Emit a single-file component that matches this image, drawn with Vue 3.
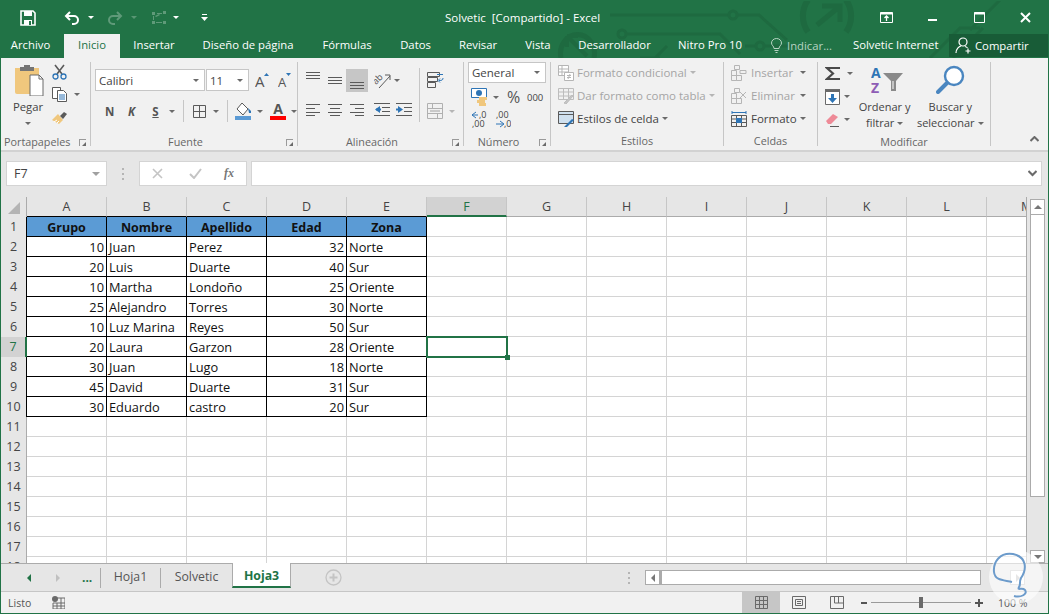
<script setup>
import { computed } from 'vue'
const tabs = [
  { t: 'Archivo', w: 63, first: true }, { t: 'Inicio', w: 56, on: true }, { t: 'Insertar', w: 68 },
  { t: 'Diseño de página', w: 120 }, { t: 'Fórmulas', w: 78 }, { t: 'Datos', w: 59 },
  { t: 'Revisar', w: 66 }, { t: 'Vista', w: 54 }, { t: 'Desarrollador', w: 99 }, { t: 'Nitro Pro 10', w: 92 }
]
const letters = 'ABCDEFGHIJKLM'.split('')
const data = [
  ['Grupo', 'Nombre', 'Apellido', 'Edad', 'Zona'],
  [10, 'Juan', 'Perez', 32, 'Norte'],
  [20, 'Luis', 'Duarte', 40, 'Sur'],
  [10, 'Martha', 'Londoño', 25, 'Oriente'],
  [25, 'Alejandro', 'Torres', 30, 'Norte'],
  [10, 'Luz Marina', 'Reyes', 50, 'Sur'],
  [20, 'Laura', 'Garzon', 28, 'Oriente'],
  [30, 'Juan', 'Lugo', 18, 'Norte'],
  [45, 'David', 'Duarte', 31, 'Sur'],
  [30, 'Eduardo', 'castro', 20, 'Sur']
]
const rows = computed(() => Array.from({ length: 18 }, (_, r) => ({
  n: r + 1,
  cells: letters.map((_, c) => {
    const inTable = r < 10 && c < 5
    const v = inTable ? data[r][c] : ''
    return {
      v,
      cls: {
        black: inTable,
        head: inTable && r === 0,
        num: typeof v === 'number',
        sel: r === 6 && c === 5
      }
    }
  })
})))
</script>

<template>
  <div class="window">
    <svg class="pattern" width="1049" height="58" viewBox="0 0 1049 58" fill="none" stroke="#1e6a40" stroke-width="3">
      <path d="M561 58A17 19 0 1 1 594 58" stroke-width="5" />
      <path d="M567 36h11M567 36v11M567 36l20 20" stroke-width="4" />
      <path d="M610 15h119M737 15h22l28 25" />
      <circle cx="733" cy="15" r="4" />
      <circle cx="622" cy="34" r="4" />
      <path d="M626 34h94l20 20M655 58l12-12M640 58h20" />
      <path d="M745 46h11M764 46h34" />
      <circle cx="760" cy="46" r="4" />
      <path d="M808 0a24 26 0 0 0 0 32M846 0a24 26 0 0 1 0 32" stroke-width="6" />
      <path d="M817 25l22-18M822 6h18v16" stroke-width="5" />
      <path d="M930 58l30-30h20M953 58l30-30M1000 0l-30 30" />
    </svg>

    <header class="titlebar">
      <div class="qat">
        <svg class="q-save" width="16" height="16" viewBox="0 0 16 16"><path d="M1 1h12l2 2v12H1z" fill="none" stroke="#fff" stroke-width="1.6"/><path d="M4 1h8v5H4zM4 10h8v5H4z" fill="#fff"/><path d="M9 11h2v4H9z" fill="#217346"/></svg>
        <svg class="q-undo" width="16" height="14" viewBox="0 0 16 14" fill="none" stroke="#fff" stroke-width="2"><path d="M6 1L2 5l4 4M2 5h8a3.500 3.500 0 0 1 0 8H8"/></svg>
        <i class="caret white q-c1"></i>
        <svg class="q-redo" width="16" height="14" viewBox="0 0 16 14" fill="none" stroke="#5f9a79" stroke-width="2"><path d="M10 1l4 4-4 4M14 5H6a3.500 3.500 0 0 0 0 8h2"/></svg>
        <i class="caret dimgreen q-c2"></i>
        <svg class="q-touch" width="17" height="14" viewBox="0 0 17 14" fill="#5f9a79"><path d="M1 1h3v3H1zM12 0h3v3h-3zM1 10h3v3H1zM12 10h3v3h-3zM6 2h5v1H6zM4 5l4-2 1 1-4 2zM5 11h6v1H5zM2 5h1v4H2z"/></svg>
        <i class="caret white q-c3"></i>
        <svg class="q-more" width="7" height="8" viewBox="0 0 7 8" fill="#fff"><path d="M1 0h5v1H1zM0 3h7L3.500 7z"/></svg>
      </div>
      <div class="doc-title">Solvetic&nbsp; [Compartido] - Excel</div>
      <div class="winbtns">
        <svg width="13" height="11" viewBox="0 0 13 11" fill="none" stroke="#fff"><path d="M.5 .5h12v10H.5z"/><path d="M.5 1.500h12" stroke-width="2"/><path d="M6.500 9V4M4.500 6l2-2 2 2" stroke-width="1.300"/></svg>
        <span class="wmin"></span>
        <svg width="11" height="11" viewBox="0 0 11 11" fill="none" stroke="#fff"><path d="M.5 .5h10v10H.5z"/><path d="M0 1.500h11" stroke-width="2"/></svg>
        <svg width="11" height="11" viewBox="0 0 11 11" fill="none" stroke="#fff" stroke-width="2"><path d="M1 1l9 9M10 1l-9 9"/></svg>
      </div>
    </header>

    <nav class="tabs">
      <div v-for="t in tabs" :key="t.t" class="tab" :class="{ on: t.on, first: t.first }" :style="{ width: t.w + 'px' }">{{ t.t }}</div>
      <div class="tell">
        <svg width="11" height="15" viewBox="0 0 11 15" fill="none" stroke="#b7d3c3"><path d="M3 10.500C3 8 .5 7.500 .5 5a5 4.500 0 0 1 10 0C10.500 7.500 8 8 8 10.500zM3.500 12.500h4M4.500 14.500h2"/></svg>
        <span>Indicar...</span>
      </div>
      <div class="account">Solvetic Internet</div>
      <div class="share">
        <svg width="17" height="17" viewBox="0 0 17 17" fill="none" stroke="#fff" stroke-width="1.200"><circle cx="8" cy="5" r="4"/><path d="M1 16c0-4 3-6.500 5-7M10 9.500c1 .3 2 .8 2.500 1.500M13 11.500v5M10.500 14h5"/></svg>
        <span>Compartir</span>
      </div>
    </nav>

    <section class="ribbon">
      <!-- Portapapeles -->
      <div class="group" style="width:90px">
        <div class="body clip">
          <div class="paste">
            <svg width="29" height="31" viewBox="0 0 29 31"><path d="M0 3h24v26H2a2 2 0 0 1-2-2z" fill="#f0c77d"/><path d="M5 2h14v4H5z" fill="#757575"/><path d="M9 0h6v3H9z" fill="#757575"/><path d="M15 10h9l4 4v17H15z" fill="#fff" stroke="#6a6a6a"/><path d="M24 10v4h4" fill="none" stroke="#6a6a6a"/></svg>
            <span class="pegar">Pegar</span>
            <i class="caret"></i>
          </div>
          <div class="rows clip-rows">
            <svg width="15" height="16" viewBox="0 0 15 16" fill="none"><path d="M3 1l7 9M12 1L5 10" stroke="#5a5a5a" stroke-width="1.600"/><circle cx="3.500" cy="12.500" r="2.500" stroke="#2e75b6" stroke-width="1.300"/><circle cx="11.500" cy="12.500" r="2.500" stroke="#2e75b6" stroke-width="1.300"/></svg>
            <div class="ir"><svg width="16" height="15" viewBox="0 0 16 15" fill="#fff" stroke="#5a5a5a"><path d="M.5 .5h8v11h-8z"/><path d="M5.500 3.500h6l3 3v8h-9z"/><path d="M7 8h6M7 10h6M7 12h6" stroke="#2e75b6"/></svg><i class="caret" style="margin-left:6px"></i></div>
            <svg width="16" height="15" viewBox="0 0 16 15"><path d="M0 10l6-6 5 6-4 4z" fill="#f0c77d"/><path d="M2 12l3-2M5 13l2-2" stroke="#fff"/><path d="M8 6l4-4 3 2-4 5z" fill="#5a5a5a"/></svg>
          </div>
        </div>
        <div class="label">Portapapeles<i class="launch"></i></div>
      </div>

      <!-- Fuente -->
      <div class="group" style="width:207px">
        <div class="body font-body">
          <div class="frow top">
            <div class="combo" style="width:110px"><span>Calibri</span><i class="caret"></i></div>
            <div class="combo" style="width:43px;margin-left:1px"><span>11</span><i class="caret"></i></div>
            <svg style="margin-left:6px" width="14" height="15" viewBox="0 0 14 15"><text class="aicon" x="0" y="14">A</text><path d="M9 3l2.500-3L14 3z" fill="#2e75b6"/></svg>
            <svg style="margin-left:9px" width="13" height="15" viewBox="0 0 13 15"><text class="aicon small" x="0" y="14">A</text><path d="M8 0h5l-2.500 3z" fill="#2e75b6"/></svg>
          </div>
          <div class="frow bot">
            <b class="fmt" style="margin-left:10px">N</b>
            <b class="fmt it" style="margin-left:13px">K</b>
            <b class="fmt un" style="margin-left:15px">S</b>
            <i class="caret" style="margin-left:9px"></i>
            <i class="vsep" style="margin-left:8px"></i>
            <svg style="margin-left:9px" width="13" height="13" viewBox="0 0 13 13" fill="none" stroke="#5a5a5a"><path d="M.5 .5h12v12H.5zM6.500 0v13M0 6.500h13"/></svg>
            <i class="caret" style="margin-left:7px"></i>
            <i class="vsep" style="margin-left:8px"></i>
            <svg style="margin-left:7px" width="17" height="18" viewBox="0 0 17 18"><path d="M7 1l6 6-5 6-6-6z" fill="#fff" stroke="#5a5a5a"/><path d="M13 6l3 3v2h-2z" fill="#2e75b6"/><path d="M0 14h16v4H0z" fill="#5b9bd5"/></svg>
            <i class="caret" style="margin-left:5px"></i>
            <div class="acolor" style="margin-left:7px"><span>A</span><i></i></div>
            <i class="caret" style="margin-left:5px"></i>
          </div>
        </div>
        <div class="label pad">Fuente<i class="launch"></i></div>
      </div>

      <!-- Alineación -->
      <div class="group" style="width:166px">
        <div class="body align-body">
          <div class="agrid">
            <div class="acell"><svg class="up" width="14" height="8" viewBox="0 0 14 8"><path d="M0 .5h14M0 3.500h14M0 6.500h14" stroke="#5a5a5a"/></svg></div>
            <div class="acell"><svg width="14" height="8" viewBox="0 0 14 8"><path d="M0 .5h14M0 3.500h14M0 6.500h14" stroke="#5a5a5a"/></svg></div>
            <div class="acell picked"><svg width="14" height="7" viewBox="0 0 14 7"><path d="M0 .5h14M0 3.500h14M0 6.500h14" stroke="#5a5a5a"/></svg></div>
            <div class="acell">
              <svg width="17" height="18" viewBox="0 0 17 18" fill="none"><text class="ab" transform="translate(2 13) rotate(-45)">ab</text><path d="M5 16L16 4M11 3h5v5" stroke="#5a5a5a"/></svg>
              <i class="caret" style="margin-left:3px"></i>
            </div>
            <div class="acell"><svg width="14" height="12" viewBox="0 0 14 12"><path d="M0 .5h14M0 4.500h9M0 8.500h14M0 11.500h9" stroke="#5a5a5a"/></svg></div>
            <div class="acell"><svg width="14" height="12" viewBox="0 0 14 12"><path d="M0 .5h14M2 4.500h10M0 8.500h14M2 11.500h10" stroke="#5a5a5a"/></svg></div>
            <div class="acell inset"><svg width="14" height="12" viewBox="0 0 14 12"><path d="M0 .5h14M5 4.500h9M0 8.500h14M5 11.500h9" stroke="#5a5a5a"/></svg></div>
            <div class="acell">
              <svg width="16" height="13" viewBox="0 0 16 13"><path d="M0 .5h16M8 4.500h8M8 8.500h8M0 12.500h16" stroke="#5a5a5a"/><path d="M6 3v7L1 6.500z" fill="#2e75b6"/><path d="M2 5.500h5v2H2z" fill="#2e75b6"/></svg>
              <svg style="margin-left:6px" width="16" height="13" viewBox="0 0 16 13"><path d="M0 .5h16M8 4.500h8M8 8.500h8M0 12.500h16" stroke="#5a5a5a"/><path d="M2 3v7l5-3.500z" fill="#2e75b6"/><path d="M0 5.500h4v2H0z" fill="#2e75b6"/></svg>
            </div>
          </div>
          <i class="vsep long"></i>
          <div class="acol">
            <svg width="17" height="16" viewBox="0 0 17 16" fill="none" stroke="#5a5a5a"><path d="M.5 .5h12v4H.5zM.5 5.500h10v4H.5zM.5 10.500h8v5H.5z"/><path d="M10 2.500h6M16 6c0 2-1 2.500-4 2.500" stroke="#2e75b6"/><path d="M13 6.500l-2 2 2 2" stroke="#2e75b6"/></svg>
            <div class="ir merge"><svg width="16" height="16" viewBox="0 0 16 16" fill="none" stroke="#b0b0b0"><path d="M.5 .5h15v15H.5zM0 5.500h16M0 10.500h16M5.500 0v5M10.500 11v5"/><path d="M3 8h10" stroke="#a0a0a0"/></svg><i class="caret dim" style="margin-left:6px"></i></div>
          </div>
        </div>
        <div class="label pad">Alineación<i class="launch"></i></div>
      </div>

      <!-- Número -->
      <div class="group" style="width:87px">
        <div class="body num-body">
          <div class="combo general"><span>General</span><i class="caret"></i></div>
          <div class="nrow r2">
            <svg width="17" height="18" viewBox="0 0 17 18"><path d="M.5 .5h15v9H.5z" fill="#fff" stroke="#2e75b6"/><circle cx="8" cy="5" r="3" fill="#2e75b6"/><path d="M8 9h8v3H8zM6 12h8v3H6zM8 15h7v3H8z" fill="#f0c77d"/></svg>
            <i class="caret" style="margin-left:5px"></i>
            <span class="pct">%</span>
            <span class="mil">000</span>
          </div>
          <div class="nrow r3">
            <svg width="16" height="17" viewBox="0 0 16 17"><path d="M5 1L1 4l4 3M1 4h6" stroke="#2e75b6" fill="none"/><text class="deci" x="8" y="7">,0</text><text class="deci" x="1" y="16">,00</text></svg>
            <svg style="margin-left:8px" width="16" height="17" viewBox="0 0 16 17"><text class="deci" x="1" y="7">,00</text><path d="M1 13h7M5 10l4 3-4 3" stroke="#2e75b6" fill="none"/><text class="deci" x="9" y="16">,0</text></svg>
          </div>
        </div>
        <div class="label pad">Número<i class="launch"></i></div>
      </div>

      <!-- Estilos -->
      <div class="group" style="width:173px">
        <div class="body rows styl">
          <div class="ir off">
            <svg width="16" height="16" viewBox="0 0 16 16" fill="#fff" stroke="#b5b5b5"><path d="M.5 .5h10v10H.5zM0 4h11M0 7h11M4 0v11"/><path d="M6.500 7.500h9v8h-9z"/><path d="M9 10.500h4M9 12.500h4M12 9l-2 5"/></svg>
            <span>Formato condicional</span><i class="caret dim"></i>
          </div>
          <div class="ir off">
            <svg width="16" height="16" viewBox="0 0 16 16" fill="none" stroke="#bdbdbd"><path d="M.5 .5h15v11H.5zM0 4h16M0 8h16M5.500 0v12M10.500 0v12"/><path d="M6 15l8-8 1 1-7 8z" fill="#c5c5c5"/></svg>
            <span>Dar formato como tabla</span><i class="caret dim"></i>
          </div>
          <div class="ir">
            <svg width="16" height="16" viewBox="0 0 16 16"><path d="M.5 .5h15v12H.5z" fill="#cfe0ef" stroke="#5a5a5a"/><path d="M0 3.500h16" stroke="#5a5a5a"/><path d="M6 16l8-8 2 1-7 7z" fill="#2e75b6"/></svg>
            <span class="dark">Estilos de celda</span><i class="caret"></i>
          </div>
        </div>
        <div class="label">Estilos</div>
      </div>

      <!-- Celdas -->
      <div class="group" style="width:94px">
        <div class="body rows cel">
          <div class="ir off">
            <svg width="16" height="16" viewBox="0 0 16 16" fill="#f1f1f1" stroke="#b5b5b5"><path d="M3.500 .5h5v4h-5zM.5 10.500h5v5h-5zM5.500 10.500h5v5h-5zM.5 5.500h5v5h-5z"/><path d="M9 5.500h6v3H9z"/></svg>
            <span>Insertar</span><i class="caret" style="margin-left:auto"></i>
          </div>
          <div class="ir off">
            <svg width="16" height="16" viewBox="0 0 16 16" fill="#f1f1f1" stroke="#b5b5b5"><path d="M3.500 .5h5v4h-5zM.5 10.500h5v5h-5zM5.500 10.500h5v5h-5zM.5 5.500h5v5h-5z"/><path d="M9 4l6 6M15 4l-6 6"/></svg>
            <span>Eliminar</span><i class="caret" style="margin-left:auto"></i>
          </div>
          <div class="ir">
            <svg width="16" height="17" viewBox="0 0 16 17" fill="none"><path d="M.5 5.500h15v11H.5z" stroke="#5a5a5a"/><path d="M0 9h16M0 12.500h16M5.500 5v12M10.500 5v12" stroke="#5a5a5a"/><path d="M5 8h6v5H5z" fill="#2e75b6"/><path d="M1 1v3M15 1v3M1 2.500h14" stroke="#2e75b6"/></svg>
            <span class="dark">Formato</span><i class="caret" style="margin-left:3px"></i>
          </div>
        </div>
        <div class="label">Celdas</div>
      </div>

      <!-- Modificar -->
      <div class="group" style="width:173px">
        <div class="body mod">
          <div class="rows mrows">
            <div class="ir">
              <svg width="16" height="15" viewBox="0 0 16 15" fill="none" stroke="#4a4a4a" stroke-width="2.200"><path d="M15 2H2l6 5.500L2 13h13"/></svg>
              <i class="caret" style="margin-left:6px"></i>
            </div>
            <div class="ir">
              <svg width="15" height="16" viewBox="0 0 15 16"><path d="M.5 .5h14v15H.5z" fill="#fff" stroke="#6a6a6a"/><path d="M0 0h15v3H0z" fill="#6a6a6a"/><path d="M6 5h3v4h3l-4.500 5L3 9h3z" fill="#2e75b6"/></svg>
              <i class="caret" style="margin-left:4px"></i>
            </div>
            <div class="ir">
              <svg width="15" height="14" viewBox="0 0 15 14"><path d="M1 8l7-7 5 3-7 7H3z" fill="#ee8a97"/><path d="M5 13.500h9" stroke="#5a5a5a"/></svg>
              <i class="caret" style="margin-left:4px"></i>
            </div>
          </div>
          <div class="big sort">
            <svg width="33" height="28" viewBox="0 0 33 28"><text class="az a" x="0" y="12">A</text><text class="az z" x="0" y="27">Z</text><path d="M12 7h20l-7 8v10h-5V15z" fill="#8a8a8a"/><path d="M22 15v8" stroke="#fff"/></svg>
            <span>Ordenar y</span>
            <span>filtrar<i class="caret" style="margin-left:3px"></i></span>
          </div>
          <div class="big find">
            <svg width="29" height="29" viewBox="0 0 29 29" fill="none"><circle cx="18" cy="11" r="9" fill="#fff" stroke="#4a86c0" stroke-width="2.400"/><path d="M11 18L2 27" stroke="#4a86c0" stroke-width="4" stroke-linecap="round"/></svg>
            <span>Buscar y</span>
            <span>seleccionar<i class="caret" style="margin-left:3px"></i></span>
          </div>
        </div>
        <div class="label">Modificar</div>
      </div>

      <div class="collapse">
        <svg width="9" height="6" viewBox="0 0 9 6" fill="none" stroke="#6a6a6a" stroke-width="2"><path d="M.5 5l4-4 4 4"/></svg>
      </div>
    </section>

    <section class="formula">
      <div class="namebox"><span>F7</span><i class="caret big-c"></i></div>
      <div class="grip"><i></i><i></i><i></i></div>
      <div class="fxbox">
        <svg width="11" height="11" viewBox="0 0 11 11" stroke="#c4c4c4" stroke-width="1.600"><path d="M1 1l9 9M10 1l-9 9"/></svg>
        <svg width="13" height="11" viewBox="0 0 13 11" fill="none" stroke="#c4c4c4" stroke-width="2"><path d="M1 6l4 4 7-9"/></svg>
        <em>fx</em>
      </div>
      <div class="input">
        <svg width="9" height="7" viewBox="0 0 9 7" fill="none" stroke="#6a6a6a" stroke-width="2"><path d="M.5 1l4 4 4-4"/></svg>
      </div>
    </section>

    <section class="sheet-area">
      <div class="sheet">
        <div class="colhead">
          <div class="corner"><svg width="12" height="12" viewBox="0 0 12 12"><path d="M12 0v12H0z" fill="#b4b4b4"/></svg></div>
          <div v-for="l in letters" :key="l" class="ch" :class="{ csel: l === 'F' }">{{ l }}</div>
        </div>
        <div v-for="r in rows" :key="r.n" class="row">
          <div class="rh" :class="{ rsel: r.n === 7, rblack: r.n <= 10 }">{{ r.n }}</div>
          <div v-for="(c, i) in r.cells" :key="i" class="cell" :class="c.cls">{{ c.v }}<i v-if="c.cls.sel" class="handle"></i></div>
        </div>
      </div>
      <aside class="vscroll">
        <div class="sb-btn"><i class="tri-up"></i></div>
        <div class="sb-thumb"></div>
        <div class="sb-space"></div>
        <div class="sb-btn down"><i class="tri-down"></i></div>
      </aside>
    </section>

    <section class="sheetbar">
      <i class="tri-l green"></i>
      <i class="tri-r"></i>
      <span class="more">...</span>
      <div class="stab first">Hoja1</div>
      <div class="stab second">Solvetic</div>
      <div class="stab active">Hoja3</div>
      <svg class="plus" width="17" height="17" viewBox="0 0 17 17" fill="none" stroke="#c4c4c4"><circle cx="8.500" cy="8.500" r="7.500" stroke-width="1.300"/><path d="M4.500 8.500h8M8.500 4.500v8" stroke-width="2"/></svg>
      <div class="grip2"><i></i><i></i><i></i></div>
      <div class="hscroll">
        <div class="hb"><i class="tri-l dark"></i></div>
        <div class="hthumb"></div>
        <div class="hspace"></div>
        <div class="hb right"><i class="tri-r"></i></div>
      </div>
    </section>

    <footer class="status">
      <span class="listo">Listo</span>
      <svg class="macro" width="13" height="13" viewBox="0 0 13 13"><circle cx="3" cy="3" r="3" fill="#6a6a6a"/><path d="M5 2h8v11H1V7h12M1 10h12M5 7v6M9 2v11" fill="none" stroke="#6a6a6a"/></svg>
      <div class="views">
        <div class="view vsel"><svg width="13" height="13" viewBox="0 0 13 13" fill="none" stroke="#6a6a6a"><path d="M.5 .5h12v12H.5zM4.500 0v13M8.500 0v13M0 4.500h13M0 8.500h13"/></svg></div>
        <div class="view"><svg width="14" height="13" viewBox="0 0 14 13" fill="none" stroke="#6a6a6a"><path d="M.5 .5h13v12H.5zM3.500 3.500h7v6h-7zM5 5.500h4M5 7.500h4"/></svg></div>
        <div class="view"><svg width="14" height="13" viewBox="0 0 14 13" fill="none" stroke="#6a6a6a"><path d="M.5 .5h13v12H.5zM4.500 0v7h9M8.500 0v7"/></svg></div>
      </div>
      <div class="zoom">
        <i class="zminus"></i>
        <div class="ztrack"><i></i></div>
        <i class="zplus"></i>
        <span>100 %</span>
      </div>
    </footer>

    <svg class="logo" width="56" height="56" viewBox="0 0 56 56" fill="none">
      <circle cx="28" cy="28" r="27" fill="#fff" fill-opacity=".6"/>
      <path d="M26 47c7 2 14-2 11-6-3-3-8 1-6-3 2-3 0-5 2-9 6-9 6-21-8-24C12 3 5 13 6 23c1 9 10 8 18 10" stroke="#6c9bcb" stroke-width="2"/>
    </svg>
  </div>
</template>

<style>
html, body { margin: 0; padding: 0; overflow: hidden; }
</style>

<style scoped>
* { box-sizing: border-box; }
.window {
  position: relative; width: 1049px; height: 614px; overflow: hidden;
  border: 1px solid #217346; background: #e6e6e6;
  font-family: "Open Sans", "Noto Sans", sans-serif; font-size: 11px; color: #444;
  display: flex; flex-direction: column;
}
i { display: block; font-style: normal; }
svg { display: block; flex: none; }
.caret { width: 0; height: 0; border: 3px solid transparent; border-top: 3px solid #6a6a6a; border-bottom: 0; flex: none; }
.caret.white { border-top-color: #fff; }
.caret.dimgreen { border-top-color: #5f9a79; }
.caret.dim { border-top-color: #b5b5b5; }

.window::before { content: ""; position: absolute; inset: 0 0 auto 0; height: 57px; background: #217346; }
.pattern { position: absolute; left: -1px; top: -1px; z-index: 1; }
.titlebar, .tabs, .ribbon, .formula, .sheet-area, .sheetbar, .status { position: relative; z-index: 2; }
.titlebar { height: 33px; display: flex; align-items: center; color: #fff; flex: none; }
.qat { display: flex; align-items: center; width: 430px; padding-left: 19px; }
.q-undo { margin-left: 28px; }
.q-c1 { margin-left: 8px; }
.q-redo { margin-left: 13px; }
.q-c2 { margin-left: 8px; opacity: .9; }
.q-touch { margin-left: 14px; }
.q-c3 { margin-left: 5px; }
.q-more { margin-left: 22px; }
.doc-title { width: 300px; font-size: 11.5px; padding-left: 14px; white-space: nowrap; }
.winbtns { display: flex; align-items: center; margin-left: auto; width: 168px; }
.winbtns svg:nth-child(3) { margin-left: 37px; }
.winbtns svg:nth-child(4) { margin-left: 35px; }
.wmin { width: 9px; height: 2px; background: #fff; margin-left: 35px; margin-top: 4px; }

.tabs { height: 24px; display: flex; color: #fff; font-size: 11.3px; flex: none; }
.tab { text-align: center; line-height: 22px; flex: none; white-space: nowrap; }
.tab.first { padding-right: 4px; }
.tab.on { background: #f1f1f1; color: #217346; }
.tell { display: flex; align-items: center; gap: 5px; margin-left: 15px; color: #b7d3c3; width: 82px; height: 22px; }
.account { white-space: nowrap; width: 95px; line-height: 22px; }
.share { margin-left: auto; width: 99px; height: 23px; background: #185c37; display: flex; align-items: center; gap: 3px; padding-left: 6px; }

.ribbon { height: 94px; background: #f1f1f1; border-bottom: 2px solid #d2d2d2; display: flex; padding-top: 4px; flex: none; }
.group { height: 84px; border-right: 1px solid #c6c6c6; display: flex; flex-direction: column; flex: none; }
.body { height: 72px; flex: none; }
.label { height: 12px; line-height: 16px; position: relative; text-align: center; font-size: 10.8px; color: #666; white-space: nowrap; }
.label.pad { padding-right: 17px; }
.launch { position: absolute; right: 4px; top: 5px; width: 7px; height: 7px; border-left: 1px solid #9a9a9a; border-top: 1px solid #9a9a9a; }
.launch::after { content: ""; position: absolute; right: 0; bottom: 0; width: 0; height: 0; border: 2px solid #6a6a6a; border-left-color: transparent; border-top-color: transparent; }
.group:first-child .label { text-align: left; padding-left: 3px; }
.rows { display: grid; grid-template-rows: repeat(3, 23px); align-items: center; }
.ir { display: flex; align-items: center; white-space: nowrap; }
.off { color: #a5a5a5; }
.dark { color: #444; }

.clip { display: flex; }
.paste { width: 54px; padding-top: 3px; display: flex; flex-direction: column; align-items: center; }
.paste svg { margin-left: 2px; }
.pegar { margin-top: 3px; font-size: 11.3px; line-height: 16px; }
.paste .caret { margin-top: 7px; }
.clip-rows { margin-top: -2px; margin-left: -3px; }

.font-body { padding-left: 4px; }
.frow { display: flex; align-items: center; }
.top { margin-top: 7px; height: 22px; }
.bot { margin-top: 9px; height: 22px; }
.combo { height: 22px; background: #fff; border: 1px solid #c6c6c6; display: flex; align-items: center; justify-content: space-between; padding: 0 5px 0 3px; font-size: 11.5px; color: #444; }
.aicon { font: 15px "Open Sans", sans-serif; fill: #555; }
.aicon.small { font-size: 13px; }
.fmt { font: 700 11.5px "Open Sans", sans-serif; color: #555; width: 9px; text-align: center; }
.fmt.it { font-style: italic; }
.fmt.un { text-decoration: underline; }
.vsep { width: 1px; height: 22px; background: #c6c6c6; flex: none; }
.vsep.long { height: 54px; margin-top: 6px; }
.acolor { width: 16px; display: flex; flex-direction: column; align-items: center; }
.acolor span { font: 700 14px/13px "Open Sans", sans-serif; color: #555; }
.acolor i { width: 16px; height: 4px; background: #f00; margin-top: 1px; }

.align-body { display: flex; }
.agrid { display: grid; grid-template-columns: 22px 18px 28px 45px; grid-template-rows: 23px 29px; margin-top: 7px; width: 121px; padding-left: 8px; align-content: start; }
.acell { display: flex; justify-content: flex-start; align-items: center; height: 23px; }
.up { margin-top: -10px; }
.picked { background: #c6c6c6; width: 22px; align-items: flex-end; justify-content: center; padding-bottom: 3px; }
.inset { padding-left: 4px; }
.acell:nth-child(n+5) { margin-top: 6px; }
.ab { font: 9px "Open Sans", sans-serif; fill: #555; }
.acol { padding-left: 7px; padding-top: 10px; }
.merge { margin-top: 15px; }

.num-body { padding: 0 4px; }
.general { width: 78px; height: 21px; }
.nrow { display: flex; align-items: center; padding-left: 3px; }
.r2 { margin-top: 5px; height: 18px; }
.r3 { margin-top: 4px; height: 18px; }
.pct { font-size: 16px; margin-left: 8px; width: 15px; color: #555; line-height: 18px; }
.mil { font-size: 9.5px; margin-left: 5px; color: #444; }
.deci { font: 9px "Open Sans", sans-serif; fill: #444; }

.styl { padding-left: 7px; font-size: 11.5px; margin-top: -1px; }
.styl span { margin: 0 3px 0 3px; }
.cel { padding: 0 14px 0 7px; font-size: 11.5px; margin-top: -1px; }
.cel span { margin-left: 4px; }

.mod { display: flex; font-size: 11px; }
.mrows { width: 41px; padding-left: 7px; }
.big { display: flex; flex-direction: column; align-items: center; white-space: nowrap; line-height: 16px; padding-top: 4px; }
.big svg { margin-bottom: 5px; }
.big span { display: flex; align-items: center; }
.sort { width: 52px; }
.sort svg { margin-left: 6px; }
.find { width: 80px; padding-top: 3px; }
.az { font: 700 14px "Open Sans", sans-serif; }
.az.a { fill: #2e75b6; }
.az.z { fill: #8e5db5; }
.collapse { margin-left: auto; margin-top: 74px; padding-right: 9px; }

.formula { height: 45px; display: flex; padding: 9px 6px 11px 5px; flex: none; }
.namebox { width: 101px; background: #fff; border: 1px solid #d4d4d4; display: flex; align-items: center; justify-content: space-between; padding: 0 6px 0 7px; font-size: 12.5px; }
.big-c { border-width: 4px; border-top-width: 4px; border-top-color: #a0a0a0; }
.grip { width: 32px; display: flex; flex-direction: column; align-items: center; justify-content: center; gap: 3px; }
.grip i { width: 2px; height: 2px; background: #b5b5b5; }
.fxbox { width: 108px; background: #fff; border: 1px solid #d4d4d4; display: flex; align-items: center; padding-left: 12px; }
.fxbox svg:nth-child(2) { margin-left: 26px; }
.fxbox em { margin-left: 22px; font: italic 700 12px "Liberation Serif", serif; color: #777; }
.input { flex: 1; margin-left: 4px; background: #fff; border: 1px solid #d4d4d4; display: flex; align-items: center; justify-content: flex-end; padding-right: 4px; }

.sheet-area { height: 366px; display: flex; flex: none; }
.sheet { width: 1026px; height: 366px; overflow: hidden; border-right: 1px solid #ababab; font-size: 12.8px; color: #111; flex: none; background: #e6e6e6; }
.colhead { display: flex; height: 20px; }
.corner { width: 26px; flex: none; display: flex; justify-content: center; align-items: center; padding: 2px 0 0 0; border-right: 1px solid #ababab; }
.ch { width: 80px; flex: none; text-align: center; line-height: 20px; color: #444; font-size: 12.5px; border-right: 1px solid #c6c6c6; border-bottom: 1px solid #ababab; }
.ch:nth-child(-n+6) { border-bottom-color: #000; }
.csel { background: #d2d2d2; color: #217346; border-bottom: 2px solid #217346 !important; }
.row { display: flex; height: 20px; }
.rh { width: 26px; flex: none; text-align: center; line-height: 20px; color: #444; font-size: 12.5px; border-right: 1px solid #ababab; }
.rblack { border-right-color: #000; }
.rsel { background: #d2d2d2; color: #217346; border-right: 2px solid #217346; }
.cell { width: 80px; height: 20px; flex: none; background: #fff; border-right: 1px solid #d4d4d4; border-bottom: 1px solid #d4d4d4; padding: 0 2px; line-height: 21px; white-space: nowrap; position: relative; }
.cell.black { border-color: #000; }
.cell.head { background: #5b9bd5; font-weight: 700; font-size: 12.5px; text-align: center; }
.cell.num { text-align: right; }
.cell.sel { box-shadow: inset 0 0 0 2px #217346; overflow: visible; z-index: 2; margin: -1px -1px 0 -1px; width: 82px; height: 22px; border: 0; }
.handle { position: absolute; right: -2px; bottom: -2px; width: 5px; height: 5px; background: #217346; }
.vscroll { width: 21px; padding: 2px 3px 0 3px; display: flex; flex-direction: column; flex: none; height: 366px; }
.sb-btn { height: 16px; background: #fff; border: 1px solid #ababab; display: flex; align-items: center; justify-content: center; flex: none; }
.sb-thumb { height: 282px; background: #fff; border: 1px solid #ababab; border-top: 0; flex: none; }
.sb-space { flex: 1; }
.sb-btn.down { height: 13px; }
.tri-up { border: 4px solid transparent; border-bottom: 4px solid #777; border-top: 0; }
.tri-down { border: 4px solid transparent; border-top: 4px solid #777; border-bottom: 0; }

.sheetbar { height: 28px; border-top: 1px solid #ababab; display: flex; align-items: center; flex: none; }
.tri-l { border: 4px solid transparent; border-right: 4px solid #777; border-left: 0; }
.tri-l.green { border-right-color: #217346; margin-left: 26px; }
.tri-r { border: 4px solid transparent; border-left: 4px solid #c0c0c0; border-right: 0; }
.sheetbar > .tri-r { margin-left: 25px; }
.more { font-weight: 700; color: #217346; margin-left: 22px; width: 18px; font-size: 12px; }
.stab { height: 20px; line-height: 18px; text-align: center; font-size: 12.3px; color: #555; border-left: 1px solid #ababab; }
.first { width: 60px; }
.second { width: 72px; }
.active { width: 59px; height: 25px; line-height: 25px; align-self: flex-start; background: #fff; color: #217346; font-weight: 700; border-left: 1px solid #ababab; border-right: 1px solid #ababab; border-bottom: 2px solid #217346; margin-top: -1px; }
.plus { margin-left: 34px; }
.grip2 { display: flex; flex-direction: column; gap: 3px; margin-left: 286px; }
.grip2 i { width: 2px; height: 2px; background: #b5b5b5; }
.hscroll { display: flex; margin-left: 15px; height: 15px; }
.hb { width: 15px; background: #fff; border: 1px solid #ababab; display: flex; align-items: center; justify-content: center; }
.hthumb { width: 321px; background: #fff; border: 1px solid #ababab; border-left: 2px solid #ababab; }
.hspace { width: 29px; }
.hb.right { border-color: #c8c8c8; }

.status { flex: 1; background: #f1f1f1; border-top: 1px solid #c6c6c6; display: flex; align-items: center; font-size: 10.5px; color: #555; }
.listo { margin-left: 7px; width: 44px; }
.views { display: flex; margin-left: 677px; align-self: stretch; }
.view { width: 38px; display: flex; align-items: center; justify-content: center; }
.vsel { background: #c6c6c6; }
.zoom { display: flex; align-items: center; margin-left: 5px; }
.zminus { width: 6px; height: 2px; background: #555; }
.ztrack { width: 100px; height: 1px; background: #9a9a9a; margin-left: 4px; position: relative; }
.ztrack i { position: absolute; left: 48px; top: -5px; width: 4px; height: 11px; background: #6a6a6a; }
.zplus { width: 8px; height: 8px; margin-left: 4px; background: linear-gradient(#555,#555) center/8px 2px no-repeat, linear-gradient(#555,#555) center/2px 8px no-repeat; }
.zoom span { margin-left: 15px; white-space: nowrap; }

.logo { position: absolute; left: 987px; top: 548px; z-index: 5; }
</style>
